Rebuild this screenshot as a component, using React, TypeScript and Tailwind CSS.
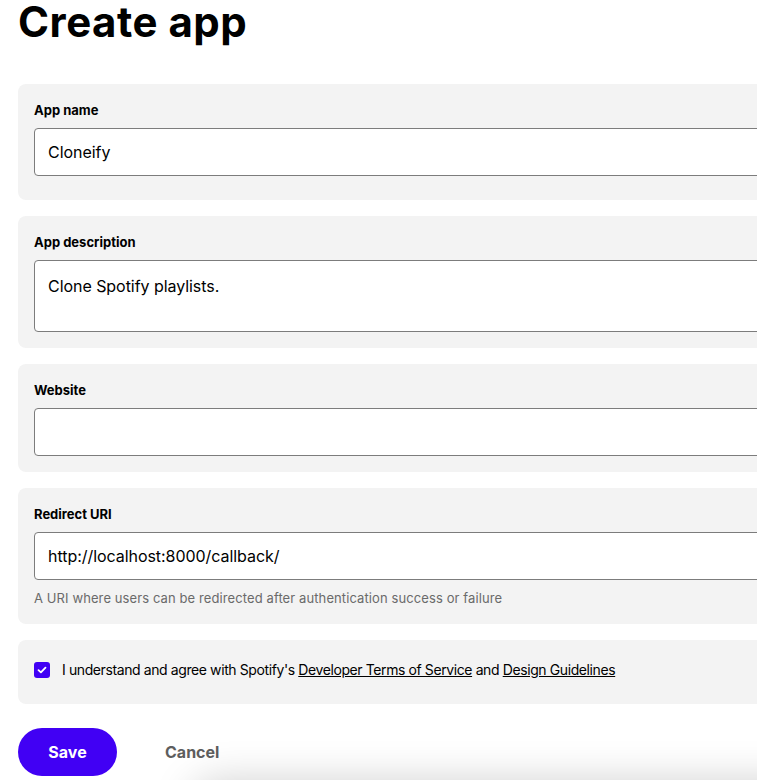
import React from 'react'

const font = { fontFamily: 'Inter, "Liberation Sans", sans-serif' }

// a grey card holding one form field
const Field = ({ label, children, className = 'pb-4' }: { label: string; children: React.ReactNode; className?: string }) => {
  return (
    <div className={`rounded-lg bg-[#f3f3f3] px-4 pt-4 mb-4 ${className}`}>
      <label className="block text-[13px] font-bold leading-5 text-black mb-2">{label}</label>
      {children}
    </div>
  )
}

const inputCls =
  'block w-full rounded-[4px] border border-[#7c7c7c] bg-white px-[13px] text-[16px] text-black outline-none tracking-[-0.05px]'

export default function App() {
  return (
    <div className="relative h-[780px] w-[757px] overflow-hidden bg-white" style={font}>
      <div className="w-[820px] pl-[18px]">
        <h1 className="text-[42px] font-bold leading-[48px] tracking-[0.5px] text-black -mt-[2px] mb-[38px]">Create app</h1>

        <Field label="App name" className="pb-6">
          <input className={`${inputCls} h-12`} defaultValue="Cloneify" />
        </Field>

        <Field label="App description">
          <textarea className={`${inputCls} h-[72px] resize-none pt-[13px] leading-6`} defaultValue="Clone Spotify playlists." />
        </Field>

        <Field label="Website">
          <input className={`${inputCls} h-12`} defaultValue="" />
        </Field>

        <Field label="Redirect URI">
          <input className={`${inputCls} h-12`} defaultValue="http://localhost:8000/callback/" />
          <p className="mt-2 text-[13px] leading-5 text-[#6a6a6a] tracking-[0.1px]">
            A URI where users can be redirected after authentication success or failure
          </p>
        </Field>

        <div className="rounded-lg bg-[#f3f3f3] px-4 pt-5 pb-6 mb-6 flex items-center gap-3">
          <span className="flex h-4 w-4 items-center justify-center rounded-[3px] bg-[#4100f4]">
            <svg width="10" height="8" viewBox="0 0 10 8" fill="none">
              <path d="M1.5 4.2 L3.9 6.4 L8.5 1.6" stroke="white" strokeWidth="1.8" strokeLinecap="round" strokeLinejoin="round" />
            </svg>
          </span>
          <span className="text-[14px] leading-5 text-black tracking-[-0.4px]">
            I understand and agree with Spotify's <a className="underline">Developer Terms of Service</a> and{' '}
            <a className="underline">Design Guidelines</a>
          </span>
        </div>

        <div className="flex items-center gap-12">
          <button className="h-12 w-[99px] rounded-full bg-[#4100f4] text-[16px] font-bold text-white">Save</button>
          <button className="text-[16px] font-bold text-[#5e5e5e]">Cancel</button>
        </div>
      </div>

      {/* shadow of the sticky bar sitting just below the fold */}
      <div className="pointer-events-none absolute left-[200px] top-[790px] h-10 w-[700px] rounded-full bg-white shadow-[0_0_40px_10px_rgba(0,0,0,0.18)]" />
    </div>
  )
}
